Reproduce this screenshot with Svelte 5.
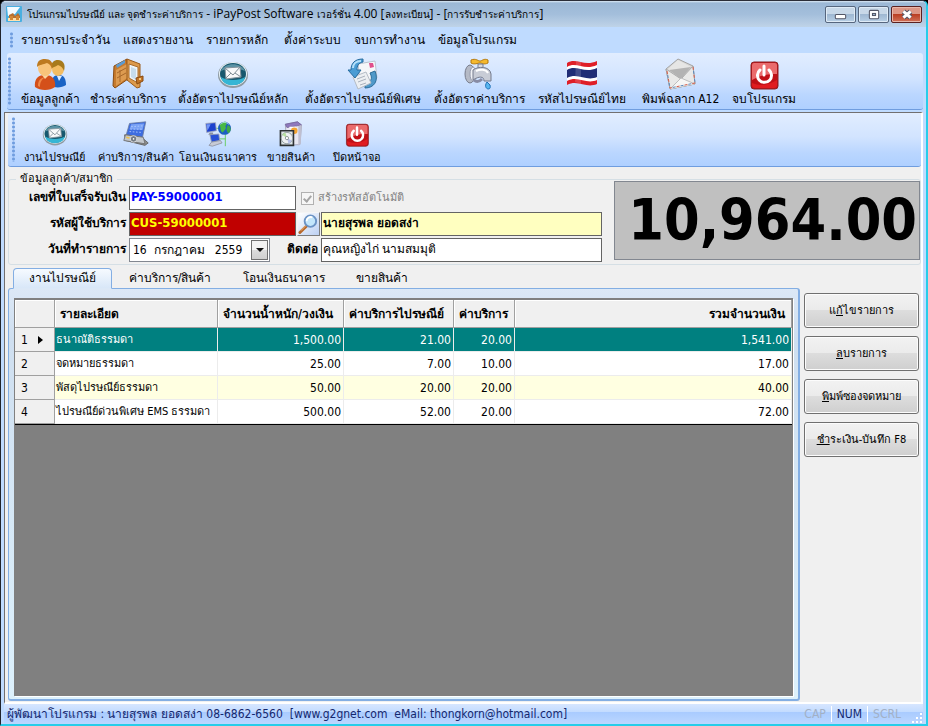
<script>
  const menus = [
    { text: 'รายการประจำวัน', width: 88 },
    { text: 'แสดงรายงาน', width: 69 },
    { text: 'รายการหลัก', width: 64 },
    { text: 'ตั้งค่าระบบ', width: 56 },
    { text: 'จบการทำงาน', width: 70 },
    { text: 'ข้อมูลโปรแกรม', width: 82 }
  ]

  const mainTools = [
    { text: 'ข้อมูลลูกค้า', icon: 'users' },
    { text: 'ชำระค่าบริการ', icon: 'wallet' },
    { text: 'ตั้งอัตราไปรษณีย์หลัก', icon: 'mail' },
    { text: 'ตั้งอัตราไปรษณีย์พิเศษ', icon: 'sync' },
    { text: 'ตั้งอัตราค่าบริการ', icon: 'tap' },
    { text: 'รหัสไปรษณีย์ไทย', icon: 'flag' },
    { text: 'พิมพ์ฉลาก A12', icon: 'envelope' },
    { text: 'จบโปรแกรม', icon: 'power' }
  ]

  const childTools = [
    { text: 'งานไปรษณีย์', icon: 'mail' },
    { text: 'ค่าบริการ/สินค้า', icon: 'device' },
    { text: 'โอนเงินธนาคาร', icon: 'network' },
    { text: 'ขายสินค้า', icon: 'box' },
    { text: 'ปิดหน้าจอ', icon: 'power' }
  ]

  const tabs = ['งานไปรษณีย์', 'ค่าบริการ/สินค้า', 'โอนเงินธนาคาร', 'ขายสินค้า']

  const rows = [
    ['ธนาณัติธรรมดา', '1,500.00', '21.00', '20.00', '1,541.00'],
    ['จดหมายธรรมดา', '25.00', '7.00', '10.00', '17.00'],
    ['พัสดุไปรษณีย์ธรรมดา', '50.00', '20.00', '20.00', '40.00'],
    ['ไปรษณีย์ด่วนพิเศษ EMS ธรรมดา', '500.00', '52.00', '20.00', '72.00']
  ]

  const actions = [
    ['แ', 'ก้', 'ไขรายการ'],
    ['', 'ล', 'บรายการ'],
    ['', 'พิ', 'มพ์ซองจดหมาย'],
    ['', 'ชำ', 'ระเงิน-บันทึก F8']
  ]

  let activeTab = $state(0)
  let selected = $state(0)
  let receipt = $state('PAY-59000001')
  let customer = $state('CUS-59000001')
  let name = $state('นายสุรพล ยอดสง่า')
  let contact = $state('คุณหญิงไก่ นามสมมุติ')
</script>

{#snippet icon(kind)}
  <svg class="icon" viewBox="0 0 32 32" aria-hidden="true">
    {#if kind === 'users'}
      <path d="M17 28c0-8 3-11 8-11s7 4 7 10c-4 3-11 3-15 1z" fill="#1a63c4" />
      <path d="M23 18l2 5 3-5z" fill="#dcecff" />
      <ellipse cx="24" cy="11" rx="6" ry="7" fill="#f3bc62" />
      <path d="M17 11c0-7 3-9 7-9 5 0 8 4 6 11-1-3-3-5-6-6-3 2-5 2-7 4z" fill="#a77a1c" />
      <path d="M1 29c-1-8 3-12 10-12s11 4 10 12c-5 4-15 4-20 0z" fill="#d4501a" />
      <path d="M4 28c0-5 2-8 7-9-4 3-5 6-5 10z" fill="#f08848" />
      <path d="M8 17l3 4 4-4z" fill="#fbd5a0" />
      <ellipse cx="11" cy="10" rx="7" ry="8" fill="#f8c47a" />
      <path d="M3 9c0-6 3-8 8-8s9 3 7 10c-1-3-2-5-5-6-4 2-7 1-10 4z" fill="#bd7a20" />
    {:else if kind === 'wallet'}
      <path d="M2 8L15 1l1 20-13 9-2-2z" fill="#c67a2d" stroke="#8a4c12" />
      <path d="M4 7l9-5v3L5 10z" fill="#5c9bd2" />
      <path d="M4 12l11-6v14L4 28z" fill="#dd9b50" />
      <path d="M5 15l9-5M5 20l9-5M8 12v12" stroke="#a8682a" fill="none" />
      <path d="M15 1l13 5v23l-3 1-10-8z" fill="#dc9a4c" stroke="#9a5a1a" />
      <path d="M17 6l9 3v16l-9-5z" fill="#eef5fa" stroke="#aa6c2c" />
      <path d="M19 9l5 2v11l-5-3z" fill="#c6dcec" />
      <path d="M24 20l7-2v5l-6 3z" fill="#c27326" stroke="#8a4c12" />
      <circle cx="28" cy="21" r="1" fill="#ffe7a0" />
    {:else if kind === 'mail'}
      <ellipse cx="16" cy="17" rx="15" ry="13" fill="#8f9ba3" />
      <ellipse cx="16" cy="16" rx="14" ry="12" fill="#e7f1f5" />
      <ellipse cx="16" cy="16" rx="13" ry="11" fill="#17586e" />
      <path d="M4 19c5 4 19 4 24 0-1 10-22 12-24 0z" fill="#35b6d5" />
      <path d="M4 13C7 4 25 4 28 13c-6-3-18-3-24 0z" fill="#5b93a5" />
      <path d="M8 10l15-1 1 10-15 2z" fill="#f7f9fa" stroke="#84949c" />
      <path d="M8 10l8 7 7-8M9 20l5-5M24 19l-6-4" fill="none" stroke="#7e8d95" />
    {:else if kind === 'sync'}
      <path d="M11 6l17-3 2 17-16 9z" fill="#f6f7f9" stroke="#bac4cf" />
      <path d="M22 5l4 0 1 4-4 1z" fill="#e0508c" />
      <path d="M18 30c9 0 14-7 10-17l-5 2c3 6 1 9-5 9z" fill="#4f99c9" stroke="#2c6c98" />
      <path d="M6 19l13-5 5 11-13 6z" fill="#eceff2" stroke="#b5bcc5" />
      <path d="M10 21l8-3M11 24l8-3M13 27l6-2" stroke="#aab2bd" />
      <path d="M16 1C8 1 4 5 4 12H1l7 8 6-8h-4c0-4 1-7 6-8z" fill="#4a9cd4" stroke="#276c9f" />
      <path d="M6 10c0-4 3-7 8-7" stroke="#b6e0fa" stroke-width="2" fill="none" />
    {:else if kind === 'tap'}
      <path d="M8 2c5-2 7 1 9 1s4-3 8-1v3c-4 2-6 0-8 0S11 7 8 5z" fill="#f5b92e" stroke="#b4790d" />
      <path d="M15 6h5v6h-5z" fill="#dadce2" stroke="#777c8c" />
      <ellipse cx="7" cy="16" rx="5" ry="9" fill="#b5bac6" stroke="#777c8c" />
      <ellipse cx="10" cy="16" rx="3" ry="7" fill="#eff1f5" stroke="#979cad" />
      <path d="M10 12c5-4 17-4 18 4v7h-7c0-5-5-5-11-1z" fill="#c8ccd6" stroke="#747a8c" />
      <path d="M13 13c4-2 10-2 12 2" stroke="#fff" stroke-width="2" fill="none" />
      <path d="M11 22c2 2 5 2 8-1" stroke="#888ca5" stroke-width="3" fill="none" />
      <path d="M24 24c-5 7 5 10 3 3z" fill="#58b7f0" stroke="#1d6fb5" />
    {:else if kind === 'flag'}
      <path d="M1 5C10-1 18 9 31 3v23C20 31 12 21 1 27z" fill="#df1f28" />
      <path d="M1 9C10 3 18 13 31 7v15C20 27 12 17 1 23z" fill="#fff" />
      <path d="M1 12C10 6 18 16 31 10v9C20 24 12 14 1 20z" fill="#202d76" />
      <path d="M10 3c2 0 3 1 5 1v22l-6-2z" fill="#fff" opacity=".15" />
    {:else if kind === 'envelope'}
      <path d="M1 11L13 1l15 7 2 18-25 5z" fill="#d7d7d6" stroke="#a3a3a3" />
      <path d="M3 11L13 2l13 7-11 12z" fill="#e6e6e5" />
      <path d="M4 12l22-3-10 12z" fill="#b3b3b3" />
      <path d="M1 11l15 10L28 8l2 18-25 5z" fill="#e9e9e8" stroke="#aaa" />
      <path d="M5 31l11-11 14 6" fill="#f6f6f5" stroke="#bdbdbd" />
      <path d="M2 13l3 17 25-5-2-16" fill="none" stroke="#d55b4a" stroke-dasharray="3 5" />
      <path d="M2 13l3 17 25-5-2-16" fill="none" stroke="#5b88bb" stroke-dasharray="3 5" stroke-dashoffset="4" />
    {:else if kind === 'power'}
      <rect x="3" y="4" width="27" height="27" rx="3" fill="#c01016" stroke="#8d2225" />
      <path d="M4 7q0-2 2-2h21q2 0 2 2v9Q16 15 4 22z" fill="#ea6b6c" />
      <path d="M4 25q12 5 25-3v5q0 3-3 3H7q-3 0-3-3z" fill="#e01c20" />
      <path d="M12 12a7 7 0 1 0 9 0M16 8v9" fill="none" stroke="#fff" stroke-width="3" stroke-linecap="round" />
    {:else if kind === 'device'}
      <path d="M8 3l20-2-4 19-20-3z" fill="#3d6ce0" stroke="#6b7ca0" />
      <path d="M10 4l16-1-2 8-16-1z" fill="#7aa2f5" />
      <path d="M10 7l14-1M9 10l14 0M8 13l14 1" stroke="#b8d0ff" stroke-dasharray="2 2" />
      <path d="M2 17l22 4 7 6-4 3-24-6z" fill="#8e8f8e" stroke="#5c5c5c" />
      <path d="M3 17l22 3 2 8L1 24z" fill="#c3c7cb" stroke="#6a6a6a" />
      <circle cx="13" cy="22" r="4" fill="#737a83" stroke="#e7e7e7" />
      <circle cx="13" cy="22" r="1" fill="#fff" />
      <path d="M4 20l4 1" stroke="#efc34a" stroke-width="2" />
    {:else if kind === 'network'}
      <path d="M12 9h10M25 13v18M15 22h10" stroke="#54c743" />
      <path d="M1 3l12-1 1 10-12 2z" fill="#1c41cd" stroke="#a8adbb" />
      <path d="M2 4l5 0-4 8z" fill="#7597f6" />
      <path d="M6 14h4v2h3v1H4z" fill="#8c91a0" />
      <path d="M6 17l11-1 1 8-10 2z" fill="#2850d6" stroke="#9ca2b2" />
      <path d="M8 26l11-2 2 3-12 4-4-1z" fill="#c7cbd6" stroke="#8c91a0" />
      <circle cx="24" cy="9" r="8" fill="#1d5fc2" />
      <path d="M18 5c3-4 6-4 8-4 0 3 2 3-1 5 2 3-1 5-3 8-4-1-2-5-4-9z" fill="#48b944" />
      <path d="M28 5c5 2 4 8 1 10-3-2-3-6-1-10z" fill="#3ca746" />
      <path d="M19 4c3-3 7-3 10 0" stroke="#d1edff" fill="none" />
    {:else if kind === 'box'}
      <path d="M9 4l15-3 5 4-2 24-16 1z" fill="#e7e7f2" stroke="#9d9db3" />
      <path d="M9 4l15-3 5 4-18 3z" fill="#8e79bd" stroke="#72629c" />
      <path d="M25 6l4-1-1 23-3 2z" fill="#bfbfd0" />
      <path d="M14 7h8v2h-8z" fill="#fff" />
      <circle cx="20" cy="12" r="4" fill="#f3a432" />
      <path d="M3 12h16v18H3z" fill="#dbe3e6" stroke="#2c3133" stroke-width="2" />
      <circle cx="11" cy="21" r="7" fill="#eef1f2" stroke="#879295" />
      <path d="M11 21l-6-4a7 7 0 0 1 4-3z" fill="#b6df9f" />
      <path d="M11 21l6 3a7 7 0 0 1-4 4z" fill="#b7bfe7" />
      <circle cx="11" cy="21" r="2" fill="#fff" stroke="#7d8588" />
    {/if}
  </svg>
{/snippet}

<div class="window">
  <header class="titlebar">
    <svg class="app-icon" viewBox="0 0 16 16" aria-hidden="true">
      <rect width="16" height="16" rx="1" fill="#4aafe0" />
      <path d="M1 1h13L9 8 2 10z" fill="#f4fbff" />
      <path d="M3 9l4-2 2 3 3-3 2 3v4H3z" fill="#b87030" />
      <path d="M2 12h12v3H2z" fill="#ffe1ad" />
      <path d="M4 10h3v4H4zM10 10h3v4h-3z" fill="#d38836" />
    </svg>
    <h1>
      <span>โปรแกรมไปรษณีย์ และ จุดชำระค่าบริการ</span> - iPayPost Software <span>เวอร์ชั่น</span> 4.00
      [<span>ลงทะเบียน</span>] - [<span>การรับชำระค่าบริการ</span>]
    </h1>
    <div class="controls">
      <button type="button" aria-label="Minimize">
        <svg viewBox="0 0 28 14"><rect x="9" y="7" width="10" height="4" rx="1" fill="#fff" stroke="#535666" /></svg>
      </button>
      <button type="button" aria-label="Restore">
        <svg viewBox="0 0 28 14">
          <rect x="10" y="3" width="9" height="8" rx="1" fill="#fff" stroke="#535666" />
          <rect x="13" y="6" width="3" height="2" fill="#9cb3cc" stroke="#535666" />
        </svg>
      </button>
      <button type="button" class="close" aria-label="Close">
        <svg viewBox="0 0 28 14">
          <path d="M11 4l7 6M18 4l-7 6" stroke="#535666" stroke-width="5" />
          <path d="M11 4l7 6M18 4l-7 6" stroke="#fff" stroke-width="3" />
        </svg>
      </button>
    </div>
  </header>

  <nav class="menubar">
    <span class="grip"></span>
    {#each menus as menu}
      <button type="button" style:width="{menu.width}px">{menu.text}</button>
    {/each}
  </nav>

  <div class="toolbar main">
    <span class="grip"></span>
    {#each mainTools as tool}
      <button type="button">
        {@render icon(tool.icon)}
        <span>{tool.text}</span>
      </button>
    {/each}
  </div>

  <main class="child">
    <div class="toolbar small">
      <span class="grip"></span>
      {#each childTools as tool}
        <button type="button">
          {@render icon(tool.icon)}
          <span>{tool.text}</span>
        </button>
      {/each}
    </div>

    <fieldset class="group">
      <legend>ข้อมูลลูกค้า/สมาชิก</legend>
      <div class="group-body">
        <div class="form">
          <label class="caption" for="receipt">เลขที่ใบเสร็จรับเงิน</label>
          <input id="receipt" class="field receipt" bind:value={receipt} />
          <label class="auto">
            <input type="checkbox" checked disabled />
            <span>สร้างรหัสอัตโนมัติ</span>
          </label>

          <label class="caption" for="customer">รหัสผู้ใช้บริการ</label>
          <input id="customer" class="field customer" bind:value={customer} />
          <button type="button" class="search" aria-label="ค้นหา">
            <svg viewBox="0 0 22 22">
              <path d="M2 20l7-7" stroke="#b8692c" stroke-width="3" stroke-linecap="round" />
              <path d="M3 18l6-6" stroke="#efb77c" />
              <circle cx="13" cy="8" r="6" fill="#c3e6fb" stroke="#6b93c5" stroke-width="2" />
              <path d="M9 8c0-3 3-5 6-4" stroke="#fff" stroke-width="2" fill="none" />
            </svg>
          </button>
          <input class="field name" aria-label="ชื่อลูกค้า" bind:value={name} />

          <label class="caption" for="date">วันที่ทำรายการ</label>
          <div class="date-cell">
            <div class="date">
              <select id="date">
                <option>16 &nbsp;กรกฎาคม &nbsp;&nbsp;2559</option>
              </select>
              <span class="drop"></span>
            </div>
            <label class="caption" for="contact">ติดต่อ</label>
          </div>
          <input id="contact" class="field" bind:value={contact} />
        </div>
        <output class="total">10,964.00</output>
      </div>
    </fieldset>

    <div class="work">
      <section class="book">
        <div class="tabs" role="tablist">
          {#each tabs as tab, i}
            <button
              type="button"
              role="tab"
              class:active={activeTab === i}
              aria-selected={activeTab === i}
              onclick={() => (activeTab = i)}>{tab}</button>
          {/each}
        </div>
        <div class="page">
          <div class="grid">
            <table>
              <colgroup>
                <col class="c-num" />
                <col class="c-detail" />
                <col class="c-amount" />
                <col class="c-post" />
                <col class="c-fee" />
                <col />
              </colgroup>
              <thead>
                <tr>
                  <th></th>
                  <th>รายละเอียด</th>
                  <th>จำนวนน้ำหนัก/วงเงิน</th>
                  <th>ค่าบริการไปรษณีย์</th>
                  <th>ค่าบริการ</th>
                  <th class="sum">รวมจำนวนเงิน</th>
                </tr>
              </thead>
              <tbody>
                {#each rows as row, i}
                  <tr class:selected={selected === i} onclick={() => (selected = i)}>
                    <th>
                      <div class="row-head">
                        {i + 1}
                        {#if selected === i}<span class="pointer"></span>{/if}
                      </div>
                    </th>
                    {#each row as cell}
                      <td>{cell}</td>
                    {/each}
                  </tr>
                {/each}
              </tbody>
            </table>
          </div>
        </div>
      </section>

      <aside class="actions">
        {#each actions as [before, key, after]}
          <button type="button"><span>{before}<u>{key}</u>{after}</span></button>
        {/each}
      </aside>
    </div>
  </main>

  <footer class="status">
    <span class="credit">ผู้พัฒนาโปรแกรม : นายสุรพล ยอดสง่า 08-6862-6560 &nbsp;[www.g2gnet.com &nbsp;eMail: thongkorn@hotmail.com]</span>
    <span class="lock off">CAP</span>
    <span class="lock">NUM</span>
    <span class="lock off">SCRL</span>
    <svg class="resize" viewBox="0 0 12 12" aria-hidden="true">
      <path d="M9 1h2v2H9zM5 5h2v2H5zM9 5h2v2H9zM1 9h2v2H1zM5 9h2v2H5zM9 9h2v2H9z" fill="#fff" />
    </svg>
  </footer>
</div>

<style>
  :global(body) {
    background: #000;
  }

  .window {
    box-sizing: border-box;
    display: flex;
    flex-direction: column;
    min-height: 100vh;
    border: solid;
    border-width: 1px 2px 2px 1px;
    border-color: #2b2d38 #27cde9 #27cde9 #20242c;
    border-radius: 6px 6px 0 0;
    padding: 0 3px;
    background: #bfdbff;
    color: #000;
    font-family: 'DejaVu Sans Condensed', 'Noto Sans', sans-serif;
    font-size: 12px;
    line-height: 16px;
  }

  button,
  input,
  select {
    box-sizing: border-box;
    margin: 0;
    padding: 0;
    border: 0;
    background: none;
    color: inherit;
    font: inherit;
    white-space: nowrap;
  }

  .titlebar {
    display: flex;
    align-items: center;
    gap: 5px;
    height: 26px;
    margin: 0 -3px;
    padding: 0 4px 0 5px;
    border-radius: 5px 5px 0 0;
    background: linear-gradient(#dce9f5, #9cb8d6 2px, #a3bedb 50%, #bfd3e8);
  }

  .titlebar h1 {
    flex: 1;
    height: 18px;
    margin: 0;
    overflow: hidden;
    font-family: 'Open Sans', 'Noto Sans', sans-serif;
    font-size: 12px;
    font-weight: normal;
    line-height: 18px;
    white-space: nowrap;
  }

  .titlebar h1 span {
    font-size: 10px;
  }

  .app-icon {
    width: 16px;
    height: 16px;
  }

  .controls {
    display: flex;
    gap: 2px;
  }

  .controls button {
    width: 31px;
    height: 17px;
    border: 1px solid #56667e;
    border-radius: 2px;
    background: linear-gradient(#c8d8e8 50%, #9fb8d2 50%, #b9d0e6);
    box-shadow: inset 0 0 0 1px #dfebf6;
  }

  .controls .close {
    border-color: #5b2020;
    background: linear-gradient(#dc9686 50%, #ba3f24 50%, #d0725a);
    box-shadow: inset 0 0 0 1px #e9b7aa;
  }

  .controls svg {
    display: block;
    width: 29px;
    height: 15px;
  }

  .menubar {
    display: flex;
    align-items: center;
    gap: 14px;
    height: 26px;
    padding: 0 6px;
  }

  .menubar button {
    height: 20px;
    text-align: left;
  }

  .grip {
    align-self: stretch;
    width: 3px;
    margin: 4px 0;
    background: radial-gradient(circle, #6f9ddf 1px, transparent 2px) 0 0 / 3px 4px;
  }

  .menubar .grip {
    margin: 5px -6px 5px 0;
  }

  .toolbar {
    display: grid;
    border-bottom: 1px solid #6f9ddf;
    border-radius: 3px;
    background: linear-gradient(#e1edff, #d2e4ff 45%, #bad6ff 75%, #afd0ff);
  }

  .toolbar.main {
    grid-template-columns: 1px 62px 74px 116px 123px 90px 96px 81px 65px;
    gap: 10px;
    height: 56px;
    margin-left: 3px;
    padding-left: 1px;
  }

  .toolbar.small {
    grid-template-columns: 3px 73px 84px 74px 66px 60px;
    gap: 3px;
    height: 53px;
    margin-left: 3px;
    padding-left: 4px;
    font-size: 11px;
  }

  .toolbar button {
    display: flex;
    flex-direction: column;
    align-items: center;
  }

  .toolbar span {
    height: 16px;
  }

  .toolbar .grip {
    height: auto;
  }

  .icon {
    flex: none;
    width: 32px;
    height: 32px;
    margin: 5px 0 1px;
  }

  .small .icon {
    width: 26px;
    height: 26px;
    margin: 8px 0 3px;
  }

  .toolbar button:hover,
  .menubar button:hover {
    background: #ffe7a2;
  }

  .child {
    display: flex;
    flex: 1;
    flex-direction: column;
    margin-top: 2px;
    border: solid #716f70;
    border-width: 1px 0 0 1px;
    border-right: 2px solid #fff;
    border-bottom: 2px solid #fff;
    background: #f0f0f0;
  }

  .group {
    min-width: 0;
    margin: 5px 0 0 3px;
    padding: 0;
    border: 1px solid #d5dfe5;
    border-radius: 3px;
  }

  .group legend {
    height: 14px;
    margin-left: 7px;
    padding: 0 4px;
    font-size: 11px;
    line-height: 14px;
  }

  .group-body {
    display: flex;
    gap: 12px;
    height: 78px;
  }

  .form {
    display: grid;
    flex: 0 1 593px;
    grid-template-columns: 120px 168px 24px 1fr;
    grid-auto-rows: 24px;
    row-gap: 2px;
  }

  .caption {
    padding-right: 3px;
    font-weight: bold;
    line-height: 22px;
    text-align: right;
    white-space: nowrap;
  }

  .field {
    width: 100%;
    height: 24px;
    min-width: 0;
    padding: 0 1px 3px;
    border: 1px solid #646464;
    background: #fff;
  }

  .receipt,
  .customer {
    width: 167px;
    font-size: 13px;
    font-weight: bold;
  }

  .receipt {
    color: #00f;
  }

  .customer {
    background: #c00000;
    color: #ff0;
  }

  .name {
    background: #ffffc0;
    font-weight: bold;
  }

  .auto {
    display: flex;
    grid-column: 3 / 5;
    align-items: center;
    gap: 4px;
    padding-left: 4px;
    color: #838383;
    font-size: 11px;
  }

  .auto span {
    height: 16px;
  }

  .auto input {
    appearance: none;
    display: grid;
    width: 13px;
    height: 13px;
    border: 1px solid #b1b1b1;
    background: #f6f6f6;
    place-items: center;
  }

  .auto input:checked::after {
    content: '';
    width: 3px;
    height: 6px;
    border: solid #a5a5a5;
    border-width: 0 2px 2px 0;
    transform: rotate(40deg);
  }

  .search {
    width: 23px;
    height: 24px;
    border: 1px solid;
    border-color: #f5f5f5 #7d7d7d #7d7d7d #f5f5f5;
    background: linear-gradient(135deg, #fff, #bcd0f2);
  }

  .search svg {
    display: block;
    width: 21px;
    height: 22px;
  }

  .date-cell {
    display: flex;
    grid-column: 2 / 4;
    justify-content: space-between;
  }

  .date {
    box-sizing: border-box;
    display: grid;
    width: 141px;
    border: 1px solid #828790;
    background: #fff;
  }

  .date select {
    grid-area: 1 / 1;
    appearance: none;
    height: 22px;
    padding-left: 3px;
  }

  .drop {
    display: grid;
    grid-area: 1 / 1;
    justify-self: end;
    place-items: center;
    width: 15px;
    height: 18px;
    margin: 1px;
    border: 1px solid #707070;
    background: linear-gradient(#f2f2f2 50%, #dcdcdc 50%, #cfcfcf);
    pointer-events: none;
  }

  .drop::after {
    content: '';
    border: solid transparent;
    border-width: 4px 4px 0;
    border-top-color: #111;
  }

  .total {
    flex: 1;
    height: 77px;
    margin-top: -5px;
    border: 1px solid #828790;
    padding-right: 2px;
    background: #c0c0c0;
    font-size: 57px;
    font-weight: bold;
    line-height: 77px;
    text-align: right;
  }

  .work {
    display: flex;
    flex: 1;
    gap: 4px;
    padding: 3px 2px 1px 3px;
  }

  .book {
    display: flex;
    flex: 1;
    flex-direction: column;
    min-width: 0;
  }

  .tabs {
    display: grid;
    grid-template-columns: 99px 116px 112px 84px;
    height: 20px;
    padding-left: 5px;
  }

  .tabs button {
    height: 21px;
    border: 1px solid transparent;
    line-height: 19px;
  }

  .tabs .active {
    z-index: 1;
    border-color: #83aee3;
    border-bottom-color: #dbe8f7;
    border-radius: 4px 4px 0 0;
    background: linear-gradient(#f6faff, #d8e7f8);
  }

  .page {
    display: flex;
    flex: 1;
    border: 1px solid #83aee3;
    border-right-width: 2px;
    border-bottom-width: 2px;
    border-radius: 3px;
    padding: 9px 5px 3px;
    background: linear-gradient(#dce8f6, #cfdff0 12%, #ddf1fc);
  }

  .grid {
    flex: 1;
    border: 1px solid #808080;
    border-top-width: 2px;
    background: #808080;
    box-shadow: 1px 1px #fff;
  }

  table {
    width: 100%;
    border-bottom: 1px solid #000;
    border-spacing: 0;
    table-layout: fixed;
    background: #fff;
  }

  .c-num {
    width: 40px;
  }

  .c-detail {
    width: 163px;
  }

  .c-amount {
    width: 126px;
  }

  .c-post {
    width: 110px;
  }

  .c-fee {
    width: 61px;
  }

  th,
  td {
    box-sizing: border-box;
    height: 24px;
    overflow: hidden;
    padding: 0 2px;
    border: solid #ececec;
    border-width: 0 1px 1px 0;
    line-height: 20px;
    text-align: right;
    white-space: nowrap;
  }

  td:nth-child(2) {
    padding: 0 1px;
    font-size: 11px;
    text-align: left;
  }

  th {
    border-color: #a0a0a0;
    background: #f0f0f0;
  }

  thead th {
    height: 28px;
    padding: 0 5px;
    box-shadow: inset 1px 1px #fff;
    text-align: left;
  }

  thead th.sum {
    padding-right: 6px;
    text-align: right;
  }

  tbody th {
    padding: 0 6px;
    font-weight: normal;
  }

  .row-head {
    display: flex;
    align-items: center;
    gap: 10px;
  }

  .pointer {
    border: solid transparent;
    border-width: 4px 0 4px 5px;
    border-left-color: #000;
  }

  tbody tr:nth-child(3) td {
    background: #ffffe1;
  }

  tbody tr.selected td {
    background: #008080;
    color: #fff;
  }

  .actions {
    display: flex;
    flex: none;
    flex-direction: column;
    gap: 8px;
    width: 115px;
    padding-top: 25px;
  }

  .actions button {
    height: 35px;
    border: 1px solid #707070;
    border-radius: 3px;
    background: linear-gradient(#f2f2f2, #ebebeb 48%, #dddddd 50%, #cfcfcf);
    box-shadow: inset 0 0 0 1px #fcfcfc;
    font-size: 11px;
  }

  .status {
    display: flex;
    align-items: center;
    height: 20px;
    padding-left: 3px;
    background: linear-gradient(#d7e6ff, #c4dcff 38%, #a9cbff 42%, #bcd7ff);
    color: #15286e;
  }

  .status .credit {
    flex: 1;
    height: 16px;
    white-space: nowrap;
  }

  .lock {
    padding: 0 5px;
    border-right: 1px solid #fff;
  }

  .lock.off {
    color: #a2b0c5;
  }

  .lock:nth-of-type(4) {
    padding-right: 10px;
    border-right: 0;
  }

  .resize {
    align-self: flex-end;
    width: 12px;
    height: 12px;
  }
</style>
